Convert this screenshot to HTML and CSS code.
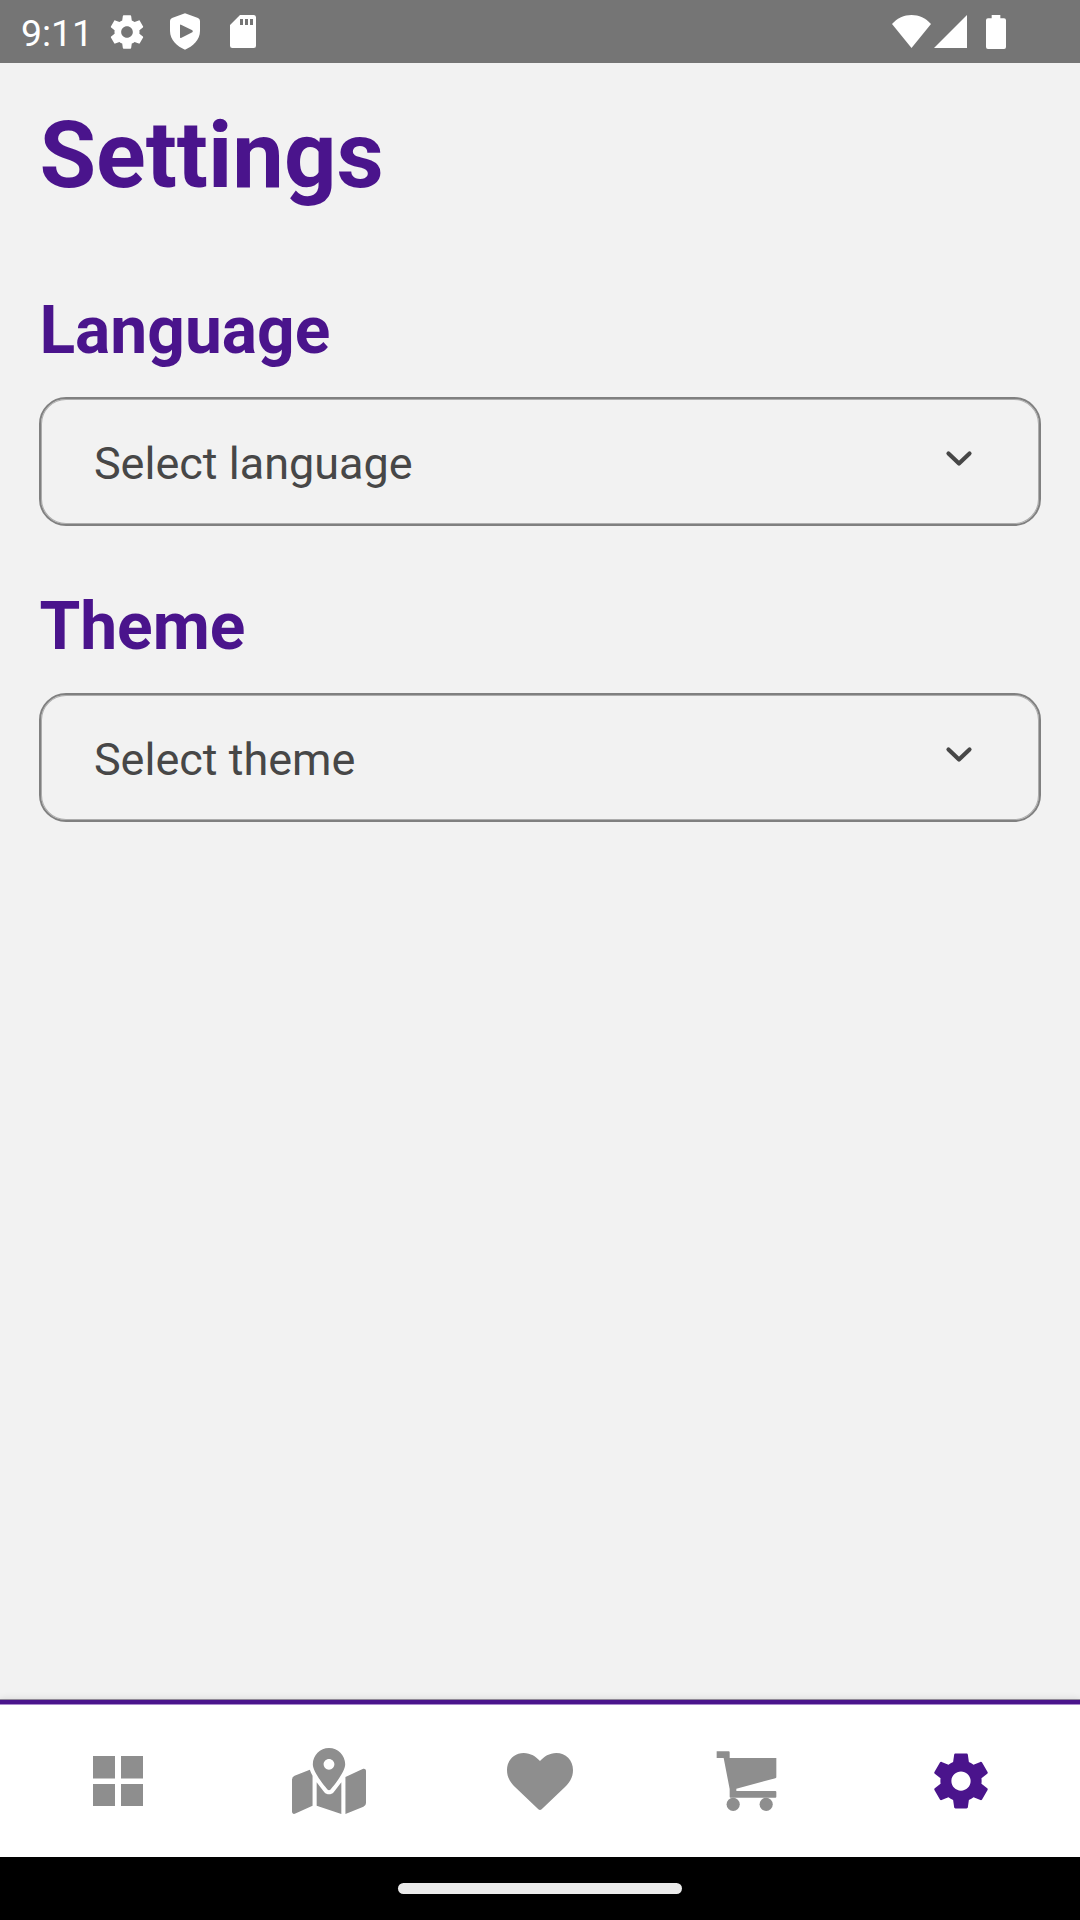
FILE: index.html
```html
<!DOCTYPE html>
<html lang="en">
<head>
<meta charset="utf-8">
<title>Settings</title>
<link rel="stylesheet" href="styles.css">
</head>
<body>
<div class="screen">
  <header class="status">
    <span class="time">9:11</span>
    <svg class="s-gear" viewBox="0 0 24 24"><path d="M19.43 12.98c.04-.32.07-.64.07-.98s-.03-.66-.07-.98l2.11-1.65c.19-.15.24-.42.12-.64l-2-3.46c-.12-.22-.39-.3-.61-.22l-2.49 1c-.52-.4-1.08-.73-1.69-.98l-.38-2.65C14.46 2.18 14.25 2 14 2h-4c-.25 0-.46.18-.49.42l-.38 2.65c-.61.25-1.17.59-1.69.98l-2.49-1c-.23-.09-.49 0-.61.22l-2 3.46c-.13.22-.07.49.12.64l2.11 1.65c-.04.32-.07.65-.07.98s.03.66.07.98l-2.11 1.65c-.19.15-.24.42-.12.64l2 3.46c.12.22.39.3.61.22l2.49-1c.52.4 1.08.73 1.69.98l.38 2.65c.03.24.24.42.49.42h4c.25 0 .46-.18.49-.42l.38-2.65c.61-.25 1.17-.59 1.69-.98l2.49 1c.23.09.49 0 .61-.22l2-3.46c.12-.22.07-.49-.12-.64l-2.11-1.65zM12 15.5c-1.93 0-3.5-1.57-3.5-3.5s1.57-3.5 3.5-3.5 3.5 1.57 3.5 3.5-1.57 3.5-3.5 3.5z"/></svg>
    <svg class="s-shield" viewBox="0 0 90 111"><path fill-rule="evenodd" d="M45 1 84 15Q90 18 90 24V54C90 80 68 101 45 110 22 101 0 80 0 54V24Q0 18 6 15ZM30 37V73Q30 76 33 75L67 58Q70 55 67 52L33 35Q30 34 30 37Z"/></svg>
    <svg class="s-card" viewBox="0 0 78 99"><path fill-rule="evenodd" d="M30 0H71Q78 0 78 7V92Q78 99 71 99H7Q0 99 0 92V30ZM30 12V30H39V12ZM45 12V30H54V12ZM60 12V30H69V12Z"/></svg>
    <div class="signals">
      <svg class="s-wifi" viewBox="0 0 117 99"><path d="M58.5 99 0 27C16 9 36 0 58.5 0S101 9 117 27Z"/></svg>
      <svg class="s-cell" viewBox="0 0 99 99"><path d="M99 0V99H0Z"/></svg>
      <svg class="s-battery" viewBox="0 0 60 102"><path d="M17 0H43V10H54Q60 10 60 16V96Q60 102 54 102H6Q0 102 0 96V16Q0 10 6 10H17Z"/></svg>
    </div>
  </header>

  <main class="content">
    <h1 class="title">Settings</h1>
    <section class="group">
      <h2 class="label">Language</h2>
      <div class="select">
        <span class="select-text">Select language</span>
        <svg class="chevron" viewBox="0 0 26 15"><path d="M2.500 2.500 13 12.500 23.500 2.500"/></svg>
      </div>
    </section>
    <section class="group">
      <h2 class="label">Theme</h2>
      <div class="select">
        <span class="select-text">Select theme</span>
        <svg class="chevron" viewBox="0 0 26 15"><path d="M2.500 2.500 13 12.500 23.500 2.500"/></svg>
      </div>
    </section>
  </main>

  <nav class="tabs">
    <div class="tab"><svg class="icon" viewBox="0 0 66 66"><path d="M8 8H30V30.500H8ZM36 8H58V30.500H36ZM8 36H30V58H8ZM36 36H58V58H36Z"/></svg></div>
    <div class="tab"><svg class="icon map" viewBox="0 0 576 512"><path d="M288 0c-69.590 0-126 56.410-126 126 0 56.260 82.350 158.800 113.900 196.020 6.390 7.540 17.820 7.540 24.200 0C331.650 284.800 414 182.260 414 126 414 56.410 357.590 0 288 0zm0 168c-23.200 0-42-18.800-42-42s18.800-42 42-42 42 18.800 42 42-18.800 42-42 42zM20.120 215.950A32.006 32.006 0 0 0 0 245.660v250.320c0 11.320 11.430 19.060 21.940 14.860L160 448V214.920c-8.840-15.980-16.070-31.540-21.250-46.420L20.120 215.950zM288 359.670c-14.070 0-27.380-6.180-36.510-16.960-19.660-23.200-40.570-49.620-59.490-76.720v182l192 64V266c-18.920 27.090-39.820 53.520-59.490 76.720-9.130 10.770-22.440 16.950-36.510 16.950zm266.060-198.510L416 224v288l139.880-55.950A31.996 31.996 0 0 0 576 426.340V176.020c0-11.320-11.430-19.060-21.940-14.860z"/></svg></div>
    <div class="tab"><svg class="icon" viewBox="0 0 198 198"><path d="M99 39C87 26 71 15 50 15 22 15 0 36 0 66 0 88 10 103 24 117L94 184Q99 188 104 184L174 117C188 103 198 88 198 66 198 36 176 15 148 15 127 15 111 26 99 39Z"/></svg></div>
    <div class="tab"><svg class="icon" viewBox="-2 0 198 198"><path d="M-3 10H33Q36 10 36 13V30H176V88Q176 90 173 91L56 122V129H173Q176 129 176 132V146Q176 149 173 149H39Q36 149 36 146V123L18 30H-3Z"/><circle cx="46.500" cy="169" r="19.800"/><circle cx="145.500" cy="169" r="19.800"/></svg></div>
    <div class="tab active"><svg class="icon" viewBox="0 0 24 24"><path d="M19.430 12.980c.04-.32.07-.64.07-.98s-.03-.66-.07-.98l2.110-1.650c.19-.15.24-.42.12-.64l-2-3.460c-.12-.22-.39-.3-.61-.22l-2.490 1c-.52-.4-1.080-.73-1.690-.98l-.38-2.650C14.460 2.180 14.250 2 14 2h-4c-.25 0-.46.18-.49.42l-.38 2.650c-.61.25-1.170.59-1.690.98l-2.490-1c-.23-.09-.49 0-.61.22l-2 3.460c-.13.22-.07.49.12.64l2.110 1.650c-.04.32-.07.65-.07.98s.03.66.07.98l-2.110 1.650c-.19.15-.24.42-.12.64l2 3.460c.12.22.39.3.61.22l2.490-1c.52.4 1.080.73 1.690.98l.38 2.650c.03.24.24.42.49.42h4c.25 0 .46-.18.49-.42l.38-2.650c.61-.25 1.170-.59 1.690-.98l2.490 1c.23.09.49 0 .61-.22l2-3.460c.12-.22.07-.49-.12-.64l-2.110-1.650zM12 15.500c-1.930 0-3.500-1.570-3.500-3.500s1.570-3.500 3.500-3.500 3.500 1.570 3.500 3.500-1.570 3.500-3.500 3.500z"/></svg></div>
  </nav>
  <footer class="home"><div class="pill"></div></footer>
</div>
</body>
</html>
```
FILE: styles.css
```css
* { box-sizing: border-box; }
body {
  margin: 0;
  font-family: Roboto, "Liberation Sans", sans-serif;
}
svg { display: block; flex: none; overflow: visible; }
.screen {
  width: 1080px;
  height: 1920px;
  display: flex;
  flex-direction: column;
  background: #f2f2f2;
  overflow: hidden;
}

/* Status bar */
.status {
  height: 63px;
  flex: none;
  display: flex;
  align-items: center;
  padding: 0 74px 0 21px;
  background: #757575;
  color: #fff;
  fill: #fff;
}
.time {
  width: 86px;
  font-size: 37.4px;
  line-height: 44px;
  padding-top: 3px;
  white-space: nowrap;
}
.s-gear { width: 40px; height: 40px; }
.s-shield { width: 30px; height: 37px; margin-left: 23px; }
.s-card { width: 26px; height: 33px; margin-left: 30px; }
.signals {
  margin-left: auto;
  display: flex;
  align-items: flex-start;
}
.s-wifi { width: 39px; height: 33px; }
.s-cell { width: 33px; height: 33px; margin-left: 3px; }
.s-battery { width: 20px; height: 34px; margin-left: 19px; }

/* Settings form */
.content {
  flex: 1;
  padding: 39px 39.4px 0;
}
.title {
  margin: 0 0 65px;
  font-size: 92px;
  line-height: 108px;
  font-weight: 700;
  color: #4a148c;
}
.group { height: 296px; }
.label {
  margin: 0;
  padding-top: 17px;
  height: 122px;
  font-size: 65.9px;
  line-height: 78px;
  font-weight: 700;
  color: #4a148c;
}
.select {
  height: 129px;
  display: flex;
  align-items: center;
  justify-content: space-between;
  padding: 0 67px 0 52.5px;
  border: 2px solid #808080;
  border-radius: 27px;
  box-shadow: inset 0 0 0 1px #adadad;
}
.select-text {
  font-size: 45px;
  line-height: 54px;
  padding-top: 4px;
  color: #474747;
}
.chevron {
  width: 26px;
  height: 15px;
  margin-bottom: 6px;
  fill: none;
  stroke: #474747;
  stroke-width: 4.2;
  stroke-linecap: round;
  stroke-linejoin: round;
}

/* Bottom tabs */
.tabs {
  height: 157px;
  flex: none;
  display: flex;
  justify-content: center;
  padding: 0 14px 0 13px;
  background: #fff;
  border-top: 4px solid #4a148c;
  box-shadow: inset 0 1px 0 #a98acb, 0 -1px 0 #908a97, 0 -1px 7px rgba(0, 0, 0, .12);
}
.tab {
  flex: 1;
  display: flex;
  align-items: center;
  justify-content: center;
  fill: #8e8e8e;
}
.active { fill: #4a148c; }
.icon { width: 66px; height: 66px; }
.map { width: 74px; }

/* System gesture bar */
.home {
  height: 63px;
  flex: none;
  display: flex;
  align-items: center;
  justify-content: center;
  background: #000;
}
.pill {
  width: 284px;
  height: 11px;
  border-radius: 6px;
  background: #ebebeb;
}
```
